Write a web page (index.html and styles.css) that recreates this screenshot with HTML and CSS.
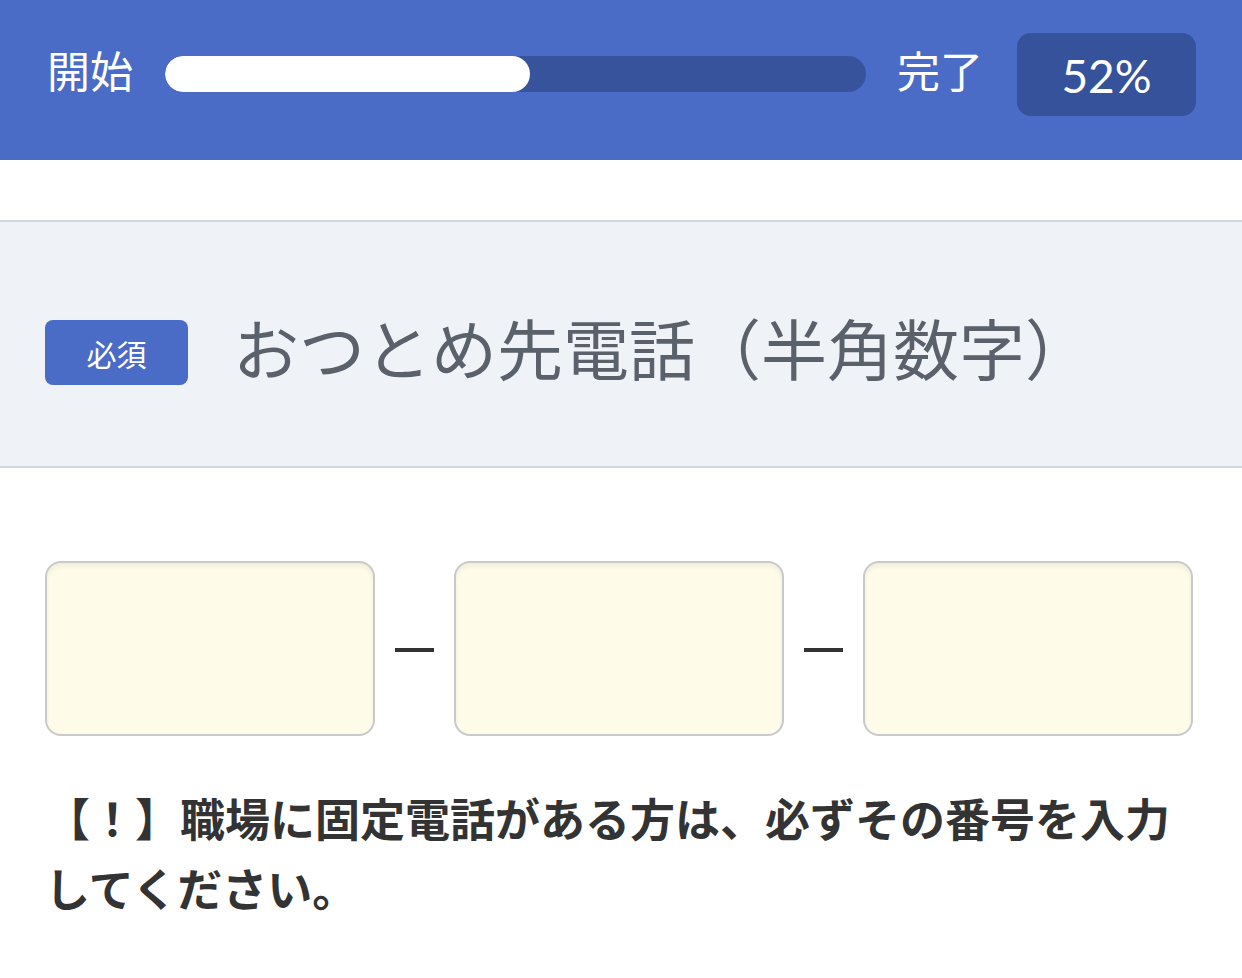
FILE: index.html
```html
<!DOCTYPE html>
<html lang="ja">
<head>
<meta charset="utf-8">
<title>おつとめ先電話</title>
<link rel="stylesheet" href="styles.css">
</head>
<body>
<header class="progress-header">
  <span class="progress-label">開始</span>
  <div class="progress-track"><div class="progress-fill" style="width:52%"></div></div>
  <span class="progress-label">完了</span>
  <div class="progress-percent">52%</div>
</header>
<div class="spacer"></div>
<section class="question-head">
  <span class="required-badge">必須</span>
  <h1 class="question-title">おつとめ先電話（半角数字）</h1>
</section>
<main class="question-body">
  <div class="tel-row">
    <input class="tel-input" type="tel" aria-label="市外局番">
    <span class="tel-dash"></span>
    <input class="tel-input" type="tel" aria-label="市内局番">
    <span class="tel-dash"></span>
    <input class="tel-input" type="tel" aria-label="加入者番号">
  </div>
  <p class="note">【！】職場に固定電話がある方は、必ずその番号を入力してください。</p>
</main>
</body>
</html>
```

FILE: styles.css
```css
* { box-sizing: border-box; }
html, body { margin: 0; padding: 0; background: #ffffff; }
body {
  font-family: "Noto Sans CJK JP", "Noto Sans", sans-serif;
  color: #333333;
}

.progress-header {
  height: 160px;
  background: #4a6cc6;
  display: flex;
  align-items: center;
  padding: 0 46px 12px 47px;
}
.progress-label {
  color: #ffffff;
  font-size: 43px;
  line-height: 1;
  font-weight: 400;
  flex: none;
  position: relative;
  top: -5px;
}
.progress-track {
  flex: 1;
  height: 36px;
  border-radius: 18px;
  background: #37539b;
  margin: 0 31px 0 32px;
  overflow: hidden;
}
.progress-fill {
  height: 100%;
  background: #ffffff;
  border-radius: 18px;
}
.progress-percent {
  flex: none;
  width: 179px;
  height: 83px;
  margin-left: 34px;
  border-radius: 14px;
  background: #36529b;
  color: #ffffff;
  font-family: "Lato", "Noto Sans", sans-serif;
  font-size: 46px;
  display: flex;
  align-items: center;
  justify-content: center;
  padding-top: 2px;
}

.spacer { height: 60px; }

.question-head {
  background: #eff2f7;
  border-top: 2px solid #d3d8de;
  border-bottom: 2px solid #d3d8de;
  display: flex;
  align-items: center;
  padding: 98px 45px 81px;
}
.required-badge {
  flex: none;
  width: 143px;
  height: 65px;
  border-radius: 8px;
  background: #4a6cc6;
  color: #ffffff;
  font-size: 30px;
  display: flex;
  align-items: center;
  justify-content: center;
}
.question-title {
  margin: 0 0 0 45px;
  font-size: 66px;
  font-weight: 400;
  line-height: 60px;
  color: #5b616b;
  position: relative;
  top: -7px;
}

.question-body {
  padding: 93px 49px 0 45px;
}
.tel-row {
  display: flex;
  align-items: center;
  gap: 20px;
}
.tel-input {
  flex: none;
  width: 330px;
  height: 175px;
  border: 2px solid #c9c9c9;
  border-radius: 16px;
  background: #fefbe8;
  box-shadow: inset 0 4px 4px rgba(0, 0, 0, 0.05);
  outline: none;
  font-size: 40px;
}
.tel-dash {
  flex: none;
  width: 39px;
  height: 4px;
  background: #333333;
  margin-top: 2px;
}
.note {
  margin: 47px 0 0 0;
  font-size: 45px;
  line-height: 70px;
  font-weight: 700;
  color: #333333;
}
```
